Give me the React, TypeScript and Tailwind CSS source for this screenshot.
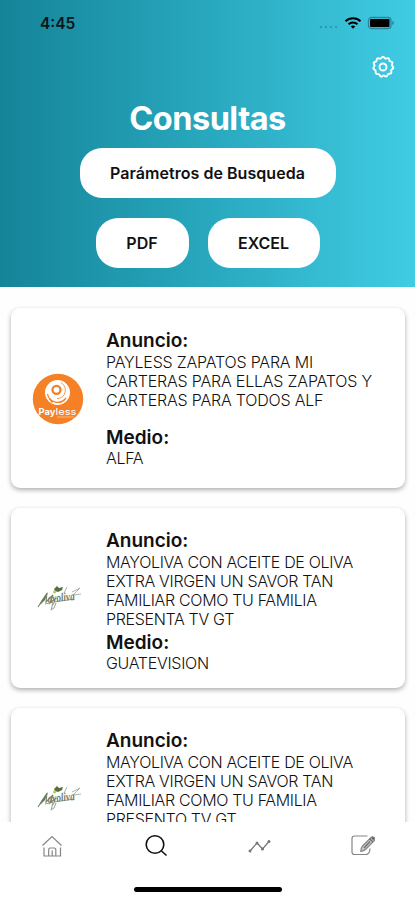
import { ReactNode } from "react";

type Ad = {
  logo: ReactNode;
  lines: string[];
  medio: string;
  bodyClass: string;
};

function PaylessLogo() {
  return (
    <svg viewBox="0 0 52 52" className="mt-[2px] mr-[2px] h-[52px] w-[52px]">
      <circle cx="26" cy="26" r="25.2" fill="#f58025" />
      <circle cx="25.5" cy="19.5" r="12.5" fill="#fff" />
      <path d="M15.500 21a10.300 10.300 0 0 0 18.500 4" fill="none" stroke="#f58025" strokeWidth="1.300" />
      <path d="M29 9.500q6.500 4.500 3.500 11.500q-2.500 4.500-7.500 4.500" fill="none" stroke="#f58025" strokeWidth="0.800" />
      <circle cx="24.500" cy="16.800" r="4" fill="none" stroke="#f58025" strokeWidth="2.300" />
      <path d="M23.500 15.500q2-.800 2.500 1t-1.500 2" fill="#fff" />
      <path d="M17.500 25.500l3 4" stroke="#f58025" strokeWidth="1.600" />
      <text x="6.500" y="41.500" fontSize="9" fontWeight="700" fill="#fff" textLength="17" lengthAdjust="spacingAndGlyphs" fontFamily="Inter, sans-serif">
        Pay
      </text>
      <text x="23.500" y="41.500" fontSize="9" fontWeight="400" fill="#fff" textLength="21" lengthAdjust="spacingAndGlyphs" fontFamily="Inter, sans-serif">
        less
      </text>
      <path d="M25 44h17" stroke="#fbc08f" strokeWidth="0.900" />
    </svg>
  );
}

function MayolivaLogo() {
  return (
    <svg viewBox="0 0 48 32" className="mt-[2px] h-8 w-12">
      <path d="M4 22l3-5 6-8-3 8-4 4z" fill="#5f7355" />
      <path d="M3 24l9-14-1 9 7-7-3 8 6-5" fill="none" stroke="#75836d" strokeWidth="1.100" />
      <path d="M19 6l3-3 2 2 4-1-1 3-4 2-3-1z" fill="#55703f" />
      <circle cx="19.500" cy="9" r="1.600" fill="#b5d334" />
      <path d="M29 10l3-6M37 9l8-4-7 7 8-1" fill="none" stroke="#a3aea0" strokeWidth="0.900" />
      <path d="M18 20l-2 7 3-2 2-5M10 21l9-2 20-3" fill="none" stroke="#94a08b" strokeWidth="1" />
      <text x="13" y="18.500" fontSize="12" fontStyle="italic" fontWeight="700" fill="#73806c" textLength="27" lengthAdjust="spacingAndGlyphs" transform="rotate(-6 25 18)" fontFamily="Liberation Serif, serif">
        ayoliva
      </text>
    </svg>
  );
}

const mayolivaLines = [
  "MAYOLIVA CON ACEITE DE OLIVA",
  "EXTRA VIRGEN UN SAVOR TAN",
  "FAMILIAR COMO TU FAMILIA",
];

const ads: Ad[] = [
  {
    logo: <PaylessLogo />,
    lines: ["PAYLESS ZAPATOS PARA MI", "CARTERAS PARA ELLAS ZAPATOS Y", "CARTERAS PARA TODOS ALF"],
    medio: "ALFA",
    bodyClass: "h-[74px] tracking-[-0.2px]",
  },
  {
    logo: <MayolivaLogo />,
    lines: [...mayolivaLines, "PRESENTA TV GT"],
    medio: "GUATEVISION",
    bodyClass: "h-[79px] tracking-[-0.33px]",
  },
  {
    logo: <MayolivaLogo />,
    lines: [...mayolivaLines, "PRESENTO TV GT"],
    medio: "GUATEVISION",
    bodyClass: "h-[79px] tracking-[-0.33px]",
  },
];

function StatusBar() {
  return (
    <div className="flex h-[46px] items-center justify-between pl-10 pr-5 text-black">
      <span className="mt-px text-[15.5px] font-semibold text-[#0a1416]">4:45</span>
      <div className="flex items-center">
        <svg viewBox="0 0 20 4" className="mt-[7px] h-1 w-5" fill="#2b8fa8">
          <circle cx="3" cy="2" r="1.100" />
          <circle cx="8" cy="2" r="1.100" />
          <circle cx="13" cy="2" r="1.100" />
          <circle cx="18" cy="2" r="1.100" />
        </svg>
        <svg viewBox="0 0 18 14" className="ml-[6px] h-[14px] w-[18px]" fill="none" stroke="#000" strokeWidth="2">
          <path d="M1.500 5.200a10.800 10.800 0 0 1 15 0M4.500 8.300a6.500 6.500 0 0 1 9 0" />
          <path d="M9 12.800l-2.300-2.500q2.300-1.800 4.600 0z" fill="#000" stroke="none" />
        </svg>
        <svg viewBox="0 0 28 14" className="ml-[5px] h-[14px] w-7">
          <rect x="1.500" y="1.500" width="22.500" height="11" rx="3" fill="none" stroke="#2887a0" strokeWidth="1.300" />
          <rect x="3" y="3" width="19.500" height="8" rx="1.200" />
          <path d="M25.200 5v4q1.800-.600 1.800-2t-1.800-2z" fill="#2887a0" />
        </svg>
      </div>
    </div>
  );
}

function GearIcon() {
  return (
    <svg viewBox="0 0 24 24" className="h-6 w-6" fill="none" stroke="#fff" strokeWidth="1.900" strokeLinejoin="round">
      <path d="M10.300 3.100Q12 .500 13.700 3.100Q14.300 4 15.300 3.500Q18.300 2.200 18.300 5.200Q18.300 6.300 19.400 6.400Q22.500 6.800 21 9.400Q20.400 10.400 21.200 11.100Q23.600 13.100 20.900 14.400Q19.900 14.900 20.200 15.900Q21.100 18.900 18.100 18.700Q17 18.600 16.700 19.700Q15.900 22.600 13.600 20.700Q12.700 20 11.900 20.800Q9.700 22.900 8.700 20.100Q8.300 19 7.200 19.100Q4.200 19.500 4.700 16.500Q4.900 15.400 3.900 15Q1.100 13.800 3.200 11.600Q4 10.800 3.300 9.900Q1.500 7.400 4.500 6.800Q5.600 6.600 5.600 5.500Q5.500 2.500 8.400 3.600Q9.700 4.100 10.300 3.100Z" />
      <circle cx="12" cy="12" r="3.500" />
    </svg>
  );
}

function PillButton({ label, className }: { label: string; className: string }) {
  return (
    <button className={`flex h-[50px] items-center justify-center rounded-[22px] bg-white text-[16px] font-semibold text-[#111] ${className}`}>
      {label}
    </button>
  );
}

function AdCard({ ad }: { ad: Ad }) {
  return (
    <article className="flex h-[180px] shrink-0 rounded-[9px] bg-white shadow-[0_2px_5px_rgba(0,0,0,0.32)]">
      <div className="flex w-[95px] items-center justify-center">{ad.logo}</div>
      <div className="pt-[21px] text-[#111]">
        <h2 className="h-6 text-[19px] leading-6 font-semibold">Anuncio:</h2>
        <p className={`text-[16px] leading-[19.3px] font-light whitespace-nowrap ${ad.bodyClass}`}>
          {ad.lines.map((line) => (
            <span key={line} className="block">
              {line}
            </span>
          ))}
        </p>
        <h2 className="h-[22px] text-[19px] leading-[22px] font-semibold">Medio:</h2>
        <p className="text-[16px] leading-[19px] font-light tracking-[-0.3px]">{ad.medio}</p>
      </div>
    </article>
  );
}

function TabBar() {
  return (
    <nav className="flex h-[78px] shrink-0 flex-col items-center bg-white">
      <div className="flex h-12 w-full items-center justify-around">
        <svg viewBox="0 0 24 24" className="h-6 w-6" fill="none" stroke="#858585" strokeWidth="1.200">
          <path d="M2.500 11.500L12 2.500l9.500 9" />
          <path d="M4 13.500v8.500h4.700v-6.500q0-1.500 1.500-1.500h4.100q1.500 0 1.500 1.500V22h4.700v-8.500M8.700 22h7.100M12.200 22v-5.500" />
        </svg>
        <svg viewBox="0 0 24 24" className="h-6 w-6" fill="none" stroke="#111" strokeWidth="1.600">
          <circle cx="11" cy="10.500" r="8.800" />
          <path d="M17.500 17l5 4.500" />
        </svg>
        <svg viewBox="0 0 24 24" className="h-6 w-6" fill="#666" stroke="#777" strokeWidth="1.200">
          <path d="M3 17l7-8 5.500 6 6-7" fill="none" />
          <circle cx="3" cy="17" r="0.900" />
          <circle cx="10" cy="9" r="0.900" />
          <circle cx="15.500" cy="15" r="0.900" />
          <circle cx="22" cy="7.500" r="0.900" />
        </svg>
        <svg viewBox="0 0 24 24" className="h-6 w-6" fill="none" stroke="#858585" strokeWidth="1.200">
          <path d="M16.500 2H3.500Q1 2 1 4.500V18q0 2.500 2.500 2.500h11q4.500 0 4.500-6" />
          <path d="M9.800 17.500q0-3.500 1.700-5.500l9-9q1.500-.700 2.700.500t.500 2.700l-9 9q-2 1.700-4.900 2.300z" fill="#c8c8c8" />
          <path d="M18.500 4.800l3.200 3M13 14l6-6.500" stroke="#6b6b6b" />
          <path d="M21 3.500l2 2" stroke="#666" strokeWidth="2" />
        </svg>
      </div>
      <div className="mt-[17px] h-[5px] w-[148px] rounded-full bg-black" />
    </nav>
  );
}

export default function App() {
  return (
    <div className="flex h-[900px] w-[415px] flex-col overflow-hidden bg-[#fefefe] font-['Inter',sans-serif]">
      <header className="h-[287px] shrink-0 bg-linear-to-r from-[#158499] via-[#28a8be] to-[#40cce4]">
        <StatusBar />
        <div className="flex h-[42px] items-center justify-end pr-5">
          <GearIcon />
        </div>
        <h1 className="mt-[10px] text-center text-[32.5px] leading-[42px] font-bold tracking-[-0.5px] text-white">Consultas</h1>
        <div className="mt-2 flex flex-col items-center gap-5">
          <PillButton label="Parámetros de Busqueda" className="w-[256px] tracking-[0.05px]" />
          <div className="flex gap-[19px]">
            <PillButton label="PDF" className="w-[93px]" />
            <PillButton label="EXCEL" className="w-[112px]" />
          </div>
        </div>
      </header>
      <main className="flex min-h-0 flex-1 flex-col gap-[20px] overflow-hidden pt-[20.6px] pr-[10px] pl-[11px]">
        {ads.map((ad, i) => (
          <AdCard key={i} ad={ad} />
        ))}
      </main>
      <TabBar />
    </div>
  );
}
